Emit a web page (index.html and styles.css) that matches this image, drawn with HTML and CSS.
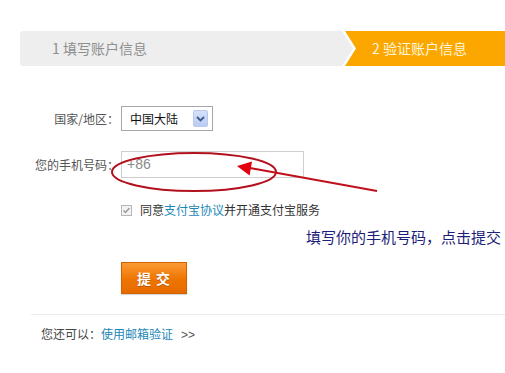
FILE: index.html
```html
<!DOCTYPE html>
<html lang="zh-CN">
<head>
<meta charset="utf-8">
<title>验证账户信息</title>
<link rel="stylesheet" href="styles.css">
</head>
<body>
<div class="page">
  <div class="steps">
    <div class="step step-done">1 填写账户信息</div>
    <div class="step step-current">2 验证账户信息</div>
  </div>

  <div class="form">
    <div class="row row-country">
      <span class="label">国家/地区：</span>
      <div class="select">
        <span class="select-text">中国大陆</span>
        <span class="select-btn">
          <svg width="9" height="6" viewBox="0 0 9 6"><path d="M1 1 L4.5 4.5 L8 1" fill="none" stroke="#3d5a8f" stroke-width="1.8"/></svg>
        </span>
      </div>
    </div>
    <div class="row row-phone">
      <span class="label">您的手机号码：</span>
      <div class="input">+86</div>
    </div>
    <div class="row row-agree">
      <span class="checkbox">
        <svg width="11" height="11" viewBox="0 0 11 11"><rect x="0.5" y="0.5" width="10" height="10" fill="#f3f3f3" stroke="#b5b5b5"/><path d="M2.5 5.5 L4.5 7.5 L8.5 3" fill="none" stroke="#9a9a9a" stroke-width="1.5"/></svg>
      </span>
      <span class="agree-text">同意<a class="link">支付宝协议</a>并开通支付宝服务</span>
    </div>
    <div class="row row-submit">
      <button class="submit">提 交</button>
    </div>
  </div>

  <div class="divider"></div>
  <div class="footer">您还可以：<a class="link">使用邮箱验证</a><span class="more">&gt;&gt;</span></div>

  <svg class="markup" width="505" height="373" viewBox="0 0 505 373">
    <ellipse cx="194" cy="172" rx="82" ry="19" fill="none" stroke="#b3101d" stroke-width="2"/>
    <line x1="377" y1="191" x2="250" y2="168" stroke="#c0101a" stroke-width="2"/>
    <polygon points="237,166 249.6,175.4 252,161.6" fill="#e30010"/>
  </svg>
  <div class="note">填写你的手机号码，点击提交</div>
</div>
</body>
</html>
```

FILE: styles.css
```css
html, body {
  margin: 0;
  padding: 0;
  background: #ffffff;
}
body {
  font-family: "Noto Sans CJK SC", "Liberation Sans", sans-serif;
  font-size: 12px;
  color: #333;
}
.page {
  position: relative;
  width: 505px;
  height: 373px;
  overflow: hidden;
}
.steps {
  display: flex;
  margin: 31px 0 0 20px;
  height: 35px;
}
.step {
  height: 35px;
  line-height: 35px;
  font-size: 14px;
  white-space: nowrap;
}
.step-done {
  width: 333px;
  flex: none;
  background: #eeeeee;
  color: #8f8f8f;
  padding-left: 32px;
  box-sizing: border-box;
  border-radius: 3px 0 0 3px;
  clip-path: polygon(0 0, calc(100% - 11px) 0, 100% 50%, calc(100% - 11px) 100%, 0 100%);
}
.step-current {
  flex: 1;
  margin-left: -8px;
  background: #fca700;
  color: #fff6dc;
  padding-left: 27px;
  clip-path: polygon(0 0, 100% 0, 100% 100%, 0 100%, 11px 50%);
}
.form {
  margin-top: 40px;
}
.row {
  display: flex;
  align-items: center;
}
.label {
  width: 119px;
  text-align: right;
  color: #555;
  font-size: 12px;
  line-height: 16px;
  flex: none;
  margin-right: 2px;
}
.row-country { height: 25px; }
.select {
  width: 92px;
  height: 25px;
  box-sizing: border-box;
  border: 1px solid #a7a7a7;
  display: flex;
  align-items: center;
  justify-content: space-between;
  padding: 0 4px 0 8px;
  background: #fff;
}
.select-text {
  font-size: 12px;
  color: #111;
  line-height: 16px;
}
.select-btn {
  width: 15px;
  height: 17px;
  box-sizing: border-box;
  border: 1px solid #b9c8ec;
  border-radius: 2px;
  background: linear-gradient(#d6e2fb, #b9cbf1);
  display: flex;
  align-items: center;
  justify-content: center;
}
.row-phone {
  margin-top: 20px;
  height: 27px;
}
.input {
  width: 183px;
  height: 27px;
  box-sizing: border-box;
  border: 1px solid #cfcfcf;
  padding-left: 5px;
  font-family: "Liberation Sans", Arial, sans-serif;
  font-size: 14px;
  line-height: 25px;
  color: #8a8a8a;
}
.row-agree {
  margin-top: 24px;
  height: 16px;
  padding-left: 121px;
}
.checkbox {
  width: 11px;
  height: 11px;
  display: flex;
  margin-right: 8px;
}
.agree-text {
  font-size: 12px;
  line-height: 16px;
  color: #333;
}
.link {
  color: #1a87b6;
  text-decoration: none;
}
.row-submit {
  margin-top: 44px;
  padding-left: 121px;
}
.submit {
  width: 66px;
  height: 32px;
  padding: 0;
  border: 1px solid #d06200;
  background: linear-gradient(#fb9a35, #ee7400 55%, #e56b00);
  color: #fff;
  font-family: "Noto Sans CJK SC", sans-serif;
  font-size: 14px;
  font-weight: bold;
  letter-spacing: 1px;
  text-shadow: 0 1px 0 #b95500;
  box-shadow: 0 1px 1px rgba(0,0,0,0.15);
}
.divider {
  margin: 20px 0 0 31px;
  height: 1px;
  background: #ebebeb;
}
.footer {
  margin: 9px 0 0 41px;
  height: 20px;
  line-height: 20px;
  font-size: 12px;
  color: #444;
}
.more {
  margin-left: 8px;
  color: #555;
  font-family: "Liberation Sans", sans-serif;
}
.markup {
  position: absolute;
  left: 0;
  top: 0;
  pointer-events: none;
}
.note {
  position: absolute;
  left: 306px;
  top: 228px;
  font-size: 15px;
  line-height: 18px;
  color: #1d1d7a;
  white-space: nowrap;
}
```
